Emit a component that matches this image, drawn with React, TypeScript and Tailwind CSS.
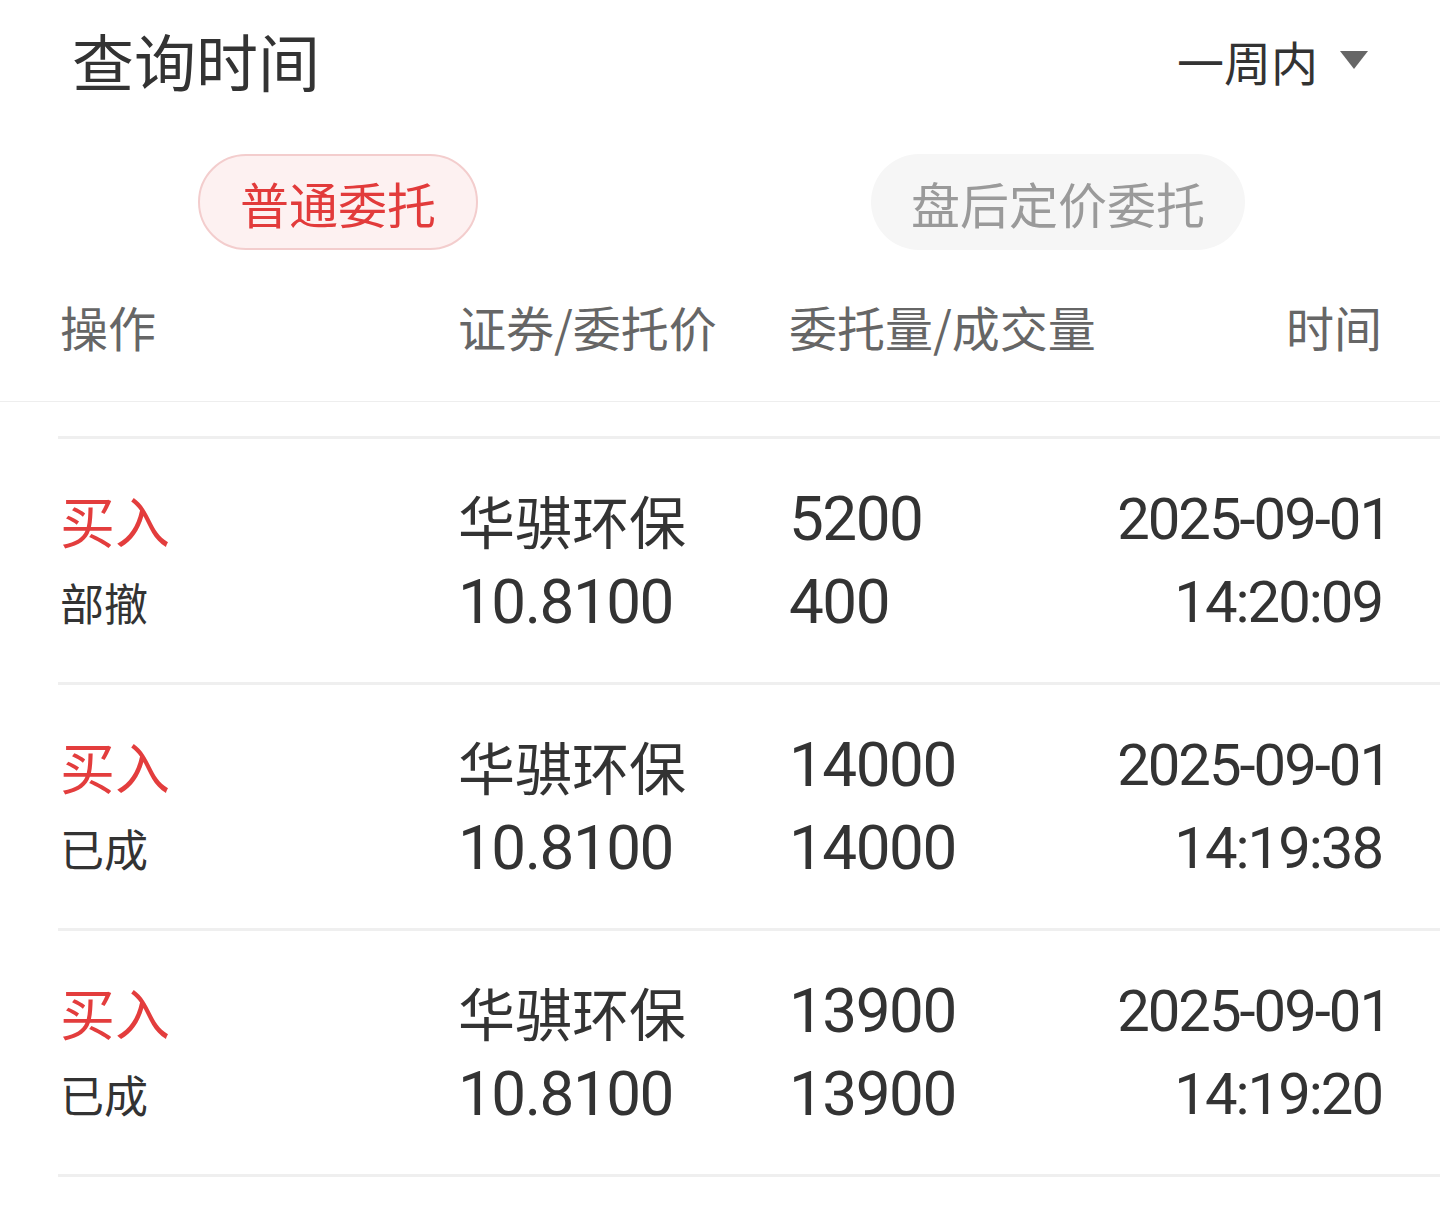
import React from "react";

const CJK = '"Noto Sans CJK SC", "Noto Sans", sans-serif';
const NUM = 'Roboto, "Noto Sans CJK SC", sans-serif';

const rows = [
  { status: "部撤", qty1: "5200", qty2: "400", time: "14:20:09" },
  { status: "已成", qty1: "14000", qty2: "14000", time: "14:19:38" },
  { status: "已成", qty1: "13900", qty2: "13900", time: "14:19:20" },
];

export default function App() {
  return (
    <div className="w-[1440px] h-[1206px] bg-white overflow-hidden text-[#333]" style={{ fontFamily: CJK }}>
      {/* top bar */}
      <div className="h-[120px] flex items-center justify-between pl-[72px] pr-[72px]">
        <div className="text-[62px] leading-none text-[#333]">查询时间</div>
        <div className="flex items-center">
          <span className="text-[47px] leading-none text-[#333]">一周内</span>
          <svg className="ml-[22px]" width="28" height="18" viewBox="0 0 28 18">
            <path d="M0 0 H28 L14 18 Z" fill="#666" />
          </svg>
        </div>
      </div>

      {/* tabs */}
      <div className="grid grid-cols-2 pt-[34px]">
        <div className="flex justify-center pr-[44px]">
          <div className="h-[96px] w-[280px] rounded-full border-2 border-[#f3cdcd] bg-[#fdf1f1] flex items-center justify-center text-[49px] leading-none text-[#e23b3b]">
            普通委托
          </div>
        </div>
        <div className="flex justify-center pr-[44px]">
          <div className="h-[96px] w-[374px] rounded-full bg-[#f6f6f6] flex items-center justify-center text-[49px] leading-none text-[#9a9a9a]">
            盘后定价委托
          </div>
        </div>
      </div>

      {/* column header */}
      <div className="h-[152px] flex items-center border-b border-[#eeeeee] pl-[60px] pr-[58px] text-[48px] leading-none text-[#666]">
        <div className="w-[398px]">操作</div>
        <div className="w-[331px]">证券/委托价</div>
        <div className="flex-1">委托量/成交量</div>
        <div>时间</div>
      </div>

      {/* rows */}
      <div className="pt-[34px]">
        {rows.map((r, i) => (
          <div key={i} className="ml-[58px] h-[246px] border-t-[3px] border-[#efefef] flex items-center pl-[2px] pr-[50px]">
            <div className="w-[398px] flex flex-col">
              <div className="h-[83px] flex items-center text-[55px] leading-none text-[#e33d3d]">买入</div>
              <div className="h-[83px] flex items-center text-[44px] leading-none text-[#333]">{r.status}</div>
            </div>
            <div className="w-[331px] flex flex-col">
              <div className="h-[83px] flex items-center text-[57px] leading-none text-[#333]">华骐环保</div>
              <div className="h-[83px] flex items-center text-[62px] leading-none tracking-[-1.5px] text-[#333]" style={{ fontFamily: NUM }}>10.8100</div>
            </div>
            <div className="flex-1 flex flex-col" style={{ fontFamily: NUM }}>
              <div className="h-[83px] flex items-center text-[62px] leading-none tracking-[-1.5px] text-[#333]">{r.qty1}</div>
              <div className="h-[83px] flex items-center text-[62px] leading-none tracking-[-1.5px] text-[#333]">{r.qty2}</div>
            </div>
            <div className="flex flex-col items-end" style={{ fontFamily: NUM }}>
              <div className="h-[83px] flex items-center text-[58px] leading-none tracking-[-2px] text-[#333]">2025-09-01</div>
              <div className="h-[83px] flex items-center pr-[8px] text-[58px] leading-none tracking-[-2px] text-[#333]">{r.time}</div>
            </div>
          </div>
        ))}
        <div className="ml-[58px] border-t-[3px] border-[#efefef]" />
      </div>
    </div>
  );
}
